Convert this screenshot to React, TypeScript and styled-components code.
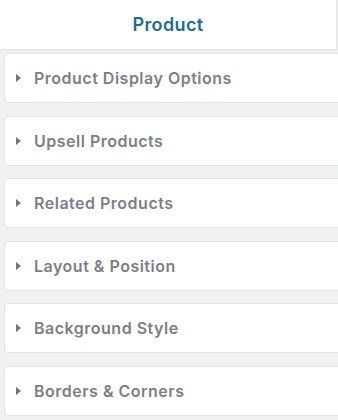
import React from "react";
import styled, { createGlobalStyle } from "styled-components";

const Global = createGlobalStyle`
  html, body { margin: 0; padding: 0; background: #f0f1f2; }
  body { font-family: Inter, "Noto Sans", sans-serif; }
`;

const Panel = styled.div`
  width: 338px;
  height: 420px;
  background: #f0f1f2;
  display: flex;
  flex-direction: column;
  overflow: hidden;
`;

const Header = styled.div`
  height: 49px;
  width: 336px;
  background: #ffffff;
  border-right: 1px solid #e3e5e7;
  border-bottom: 1px solid #e1e3e5;
  display: flex;
  align-items: center;
  justify-content: center;
  box-sizing: content-box;
`;

const Title = styled.h1`
  margin: 0;
  font-size: 18px;
  font-weight: 600;
  color: #1d6d8a;
  letter-spacing: 0.4px;
`;

const List = styled.div`
  display: flex;
  flex-direction: column;
  gap: 12.6px;
  padding: 3px 4px 0 4px;
`;

const Card = styled.div`
  height: 48px;
  width: 328px;
  background: #ffffff;
  border: 1px solid #e2e4e6;
  border-radius: 4px;
  display: flex;
  align-items: center;
  padding-left: 11px;
  gap: 13px;
`;

const Caret = styled.span`
  width: 0;
  height: 0;
  border-top: 4px solid transparent;
  border-bottom: 4px solid transparent;
  border-left: 5px solid #6f7479;
`;

const Label = styled.span`
  font-size: 16px;
  font-weight: 600;
  color: #7b8086;
  letter-spacing: 0.5px;
`;

const sections = [
  "Product Display Options",
  "Upsell Products",
  "Related Products",
  "Layout & Position",
  "Background Style",
  "Borders & Corners",
];

export default function App() {
  return (
    <Panel>
      <Global />
      <Header>
        <Title>Product</Title>
      </Header>
      <List>
        {sections.map((s) => (
          <Card key={s}>
            <Caret />
            <Label>{s}</Label>
          </Card>
        ))}
      </List>
    </Panel>
  );
}
